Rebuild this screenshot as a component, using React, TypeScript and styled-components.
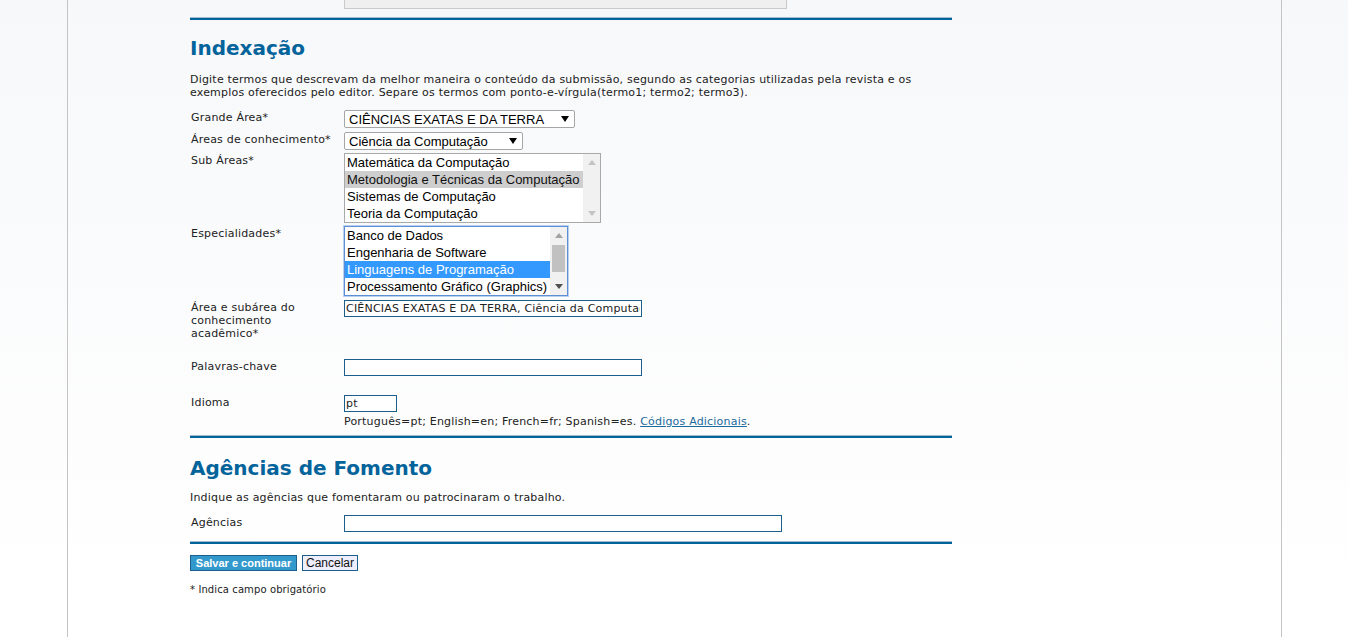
import React from "react";
import styled, { createGlobalStyle, css } from "styled-components";

const GlobalStyle = createGlobalStyle`
  html, body {
    margin: 0;
    padding: 0;
    height: 100%;
    overflow: hidden;
  }
  body {
    background: linear-gradient(#f7f8fa, #ffffff 95%);
    font-family: "DejaVu Sans", Verdana, sans-serif;
    color: #222;
  }
`;

const Frame = styled.div`
  margin-left: 67px;
  width: 1215px;
  min-height: 637px;
  border-left: 1px solid #c4c4c4;
  border-right: 1px solid #c4c4c4;
  padding-left: 122px;
  box-sizing: border-box;
`;

const Main = styled.div`
  width: 762px;
  display: flex;
  flex-direction: column;
`;

const ClippedBox = styled.div`
  margin-left: 154px;
  width: 443px;
  height: 9px;
  box-sizing: border-box;
  background: #efefef;
  border: 1px solid #c9c9c9;
  border-top: none;
`;

const Rule = styled.div<{ $top: number }>`
  margin-top: ${(p) => p.$top}px;
  height: 2px;
  border-top: 1px solid #9fbcd0;
  background: #03639b;
`;

const SectionTitle = styled.h3<{ $top: number }>`
  margin: ${(p) => p.$top}px 0 0;
  font-family: "DejaVu Sans", Verdana, sans-serif;
  font-weight: bold;
  font-size: 20px;
  line-height: 24px;
  color: #03639b;
`;

const smallText = css`
  font-size: 11px;
  line-height: 13px;
  letter-spacing: 0.2px;
  color: #222;
`;

const Intro = styled.p<{ $top: number }>`
  margin: ${(p) => p.$top}px 0 0;
  ${smallText}
`;

const Form = styled.div<{ $top: number }>`
  margin-top: ${(p) => p.$top}px;
  display: flex;
  flex-direction: column;
`;

const Row = styled.div<{ $space: number }>`
  display: grid;
  grid-template-columns: 154px 1fr;
  margin-bottom: ${(p) => p.$space}px;
`;

const FieldLabel = styled.div`
  ${smallText}
  padding: 1px 6px 0 1px;
`;

const FieldCell = styled.div`
  display: flex;
  flex-direction: column;
  align-items: flex-start;
`;

const SelectBox = styled.div<{ $width: number }>`
  width: ${(p) => p.$width}px;
  height: 18px;
  box-sizing: border-box;
  border: 1px solid #a6a6a6;
  border-radius: 2px;
  background: #fff;
  display: flex;
  align-items: center;
  justify-content: space-between;
  padding: 0 5px 0 4px;
  font-family: "Liberation Sans", Arial, sans-serif;
  font-size: 13px;
  color: #000;
`;

const Arrow = styled.svg`
  width: 8px;
  height: 6px;
  flex: none;
`;

const ListBox = styled.div<{ $width: number; $focused?: boolean }>`
  width: ${(p) => p.$width}px;
  height: 70px;
  box-sizing: border-box;
  border: 1px solid #a9a9a9;
  background: #fff;
  display: flex;
  ${(p) =>
    p.$focused &&
    css`
      border-color: #5d8fd6;
      box-shadow: 0 0 0 1px #b9d1f1;
    `}
`;

const Options = styled.div`
  flex: 1;
  display: flex;
  flex-direction: column;
  overflow: hidden;
`;

const Option = styled.div<{ $state?: "inactive" | "active" }>`
  height: 17px;
  line-height: 17px;
  padding-left: 2px;
  white-space: nowrap;
  font-family: "Liberation Sans", Arial, sans-serif;
  font-size: 13px;
  color: #000;
  ${(p) =>
    p.$state === "inactive" &&
    css`
      background: #cecece;
      color: #111;
    `}
  ${(p) =>
    p.$state === "active" &&
    css`
      background: #3399ff;
      color: #fff;
    `}
`;

const ScrollTrack = styled.div`
  width: 17px;
  flex: none;
  background: #f1f1f1;
  display: flex;
  flex-direction: column;
`;

const ScrollButton = styled.div`
  height: 17px;
  flex: none;
  display: flex;
  align-items: center;
  justify-content: center;
`;

const ScrollArrow = styled.svg`
  width: 8px;
  height: 5px;
`;

const TrackMiddle = styled.div`
  flex: 1;
  display: flex;
  justify-content: center;
  align-items: flex-start;
  padding-top: 1px;
`;

const Thumb = styled.div`
  width: 13px;
  height: 27px;
  background: #c1c1c1;
`;

const TextInput = styled.input<{ $width: number }>`
  width: ${(p) => p.$width}px;
  height: 17px;
  box-sizing: border-box;
  border: 1px solid #1d5f8c;
  border-radius: 0;
  background: #fff;
  padding: 0 1px;
  margin: 0;
  font-family: "DejaVu Sans", Verdana, sans-serif;
  font-size: 11px;
  letter-spacing: 0.2px;
  color: #222;
  outline: none;
`;

const Help = styled.div`
  margin-top: 3px;
  ${smallText}
`;

const HelpLink = styled.a`
  color: #1b6a9b;
  text-decoration: underline;
`;

const ButtonRow = styled.div`
  margin-top: 11px;
  display: flex;
  gap: 5px;
`;

const buttonBase = css`
  height: 16px;
  box-sizing: border-box;
  margin: 0;
  padding: 0;
  border: 1px solid #1d5f8c;
  border-radius: 0;
  font-family: "Liberation Sans", Arial, sans-serif;
  line-height: 14px;
  cursor: pointer;
`;

const PrimaryButton = styled.button`
  ${buttonBase}
  width: 107px;
  background: #3399cc;
  color: #fff;
  font-weight: bold;
  font-size: 11px;
`;

const SecondaryButton = styled.button`
  ${buttonBase}
  width: 56px;
  background: #eeeefd;
  color: #111;
  font-size: 12px;
`;

const Footnote = styled.div`
  margin-top: 13px;
  font-size: 10px;
  line-height: 12px;
  letter-spacing: 0.1px;
  color: #222;
`;

const DownArrow = () => (
  <Arrow viewBox="0 0 8 6">
    <polygon points="0,0 8,0 4,6" fill="#000" />
  </Arrow>
);

const Scrollbar = ({ thumb }: { thumb?: boolean }) => (
  <ScrollTrack>
    <ScrollButton>
      <ScrollArrow viewBox="0 0 8 5">
        <polygon points="0,5 8,5 4,0" fill={thumb ? "#a3a3a3" : "#c3c3c3"} />
      </ScrollArrow>
    </ScrollButton>
    <TrackMiddle>{thumb && <Thumb />}</TrackMiddle>
    <ScrollButton>
      <ScrollArrow viewBox="0 0 8 5">
        <polygon points="0,0 8,0 4,5" fill={thumb ? "#505050" : "#c3c3c3"} />
      </ScrollArrow>
    </ScrollButton>
  </ScrollTrack>
);

export default function App() {
  return (
    <>
      <GlobalStyle />
      <Frame>
        <Main>
          <ClippedBox />
          <Rule $top={8} />
          <SectionTitle $top={16}>Indexação</SectionTitle>
          <Intro $top={13}>
            Digite termos que descrevam da melhor maneira o conteúdo da submissão, segundo as
            categorias utilizadas pela revista e os exemplos oferecidos pelo editor. Separe os
            termos com ponto-e-vírgula(termo1; termo2; termo3).
          </Intro>
          <Form $top={11}>
            <Row $space={4}>
              <FieldLabel>Grande Área*</FieldLabel>
              <FieldCell>
                <SelectBox $width={231}>
                  <span>CIÊNCIAS EXATAS E DA TERRA</span>
                  <DownArrow />
                </SelectBox>
              </FieldCell>
            </Row>
            <Row $space={3}>
              <FieldLabel>Áreas de conhecimento*</FieldLabel>
              <FieldCell>
                <SelectBox $width={179}>
                  <span>Ciência da Computação</span>
                  <DownArrow />
                </SelectBox>
              </FieldCell>
            </Row>
            <Row $space={3}>
              <FieldLabel>Sub Áreas*</FieldLabel>
              <FieldCell>
                <ListBox $width={257}>
                  <Options>
                    <Option>Matemática da Computação</Option>
                    <Option $state="inactive">Metodologia e Técnicas da Computação</Option>
                    <Option>Sistemas de Computação</Option>
                    <Option>Teoria da Computação</Option>
                  </Options>
                  <Scrollbar />
                </ListBox>
              </FieldCell>
            </Row>
            <Row $space={4}>
              <FieldLabel>Especialidades*</FieldLabel>
              <FieldCell>
                <ListBox $width={224} $focused>
                  <Options>
                    <Option>Banco de Dados</Option>
                    <Option>Engenharia de Software</Option>
                    <Option $state="active">Linguagens de Programação</Option>
                    <Option>Processamento Gráfico (Graphics)</Option>
                  </Options>
                  <Scrollbar thumb />
                </ListBox>
              </FieldCell>
            </Row>
            <Row $space={19}>
              <FieldLabel>Área e subárea do conhecimento acadêmico*</FieldLabel>
              <FieldCell>
                <TextInput
                  $width={298}
                  readOnly
                  value="CIÊNCIAS EXATAS E DA TERRA, Ciência da Computação, Metodologia e Técnicas da Computação"
                />
              </FieldCell>
            </Row>
            <Row $space={19}>
              <FieldLabel>Palavras-chave</FieldLabel>
              <FieldCell>
                <TextInput $width={298} readOnly value="" />
              </FieldCell>
            </Row>
            <Row $space={0}>
              <FieldLabel>Idioma</FieldLabel>
              <FieldCell>
                <TextInput $width={53} readOnly value="pt" />
                <Help>
                  Português=pt; English=en; French=fr; Spanish=es.{" "}
                  <HelpLink href="#">Códigos Adicionais</HelpLink>.
                </Help>
              </FieldCell>
            </Row>
          </Form>
          <Rule $top={7} />
          <SectionTitle $top={18}>Agências de Fomento</SectionTitle>
          <Intro $top={11}>Indique as agências que fomentaram ou patrocinaram o trabalho.</Intro>
          <Form $top={11}>
            <Row $space={0}>
              <FieldLabel>Agências</FieldLabel>
              <FieldCell>
                <TextInput $width={438} readOnly value="" />
              </FieldCell>
            </Row>
          </Form>
          <Rule $top={9} />
          <ButtonRow>
            <PrimaryButton>Salvar e continuar</PrimaryButton>
            <SecondaryButton>Cancelar</SecondaryButton>
          </ButtonRow>
          <Footnote>* Indica campo obrigatório</Footnote>
        </Main>
      </Frame>
    </>
  );
}
